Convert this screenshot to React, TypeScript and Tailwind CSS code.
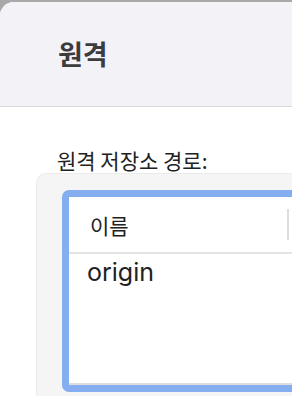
import React from "react";

export default function App() {
  const kr = { fontFamily: '"Noto Sans CJK KR", "Noto Sans", sans-serif' };
  return (
    <div className="w-[292px] h-[396px] overflow-hidden bg-[#a9a9a9] pt-[2px]">
      <div className="h-[394px] rounded-tl-[14px] bg-white overflow-hidden">
        <div className="h-[105px] bg-[#f3f2f7] border-b border-[#d7d7d7] flex items-center pl-[58px]">
          <span className="text-[27px] leading-[32px] font-bold text-[#3c3c3c]" style={kr}>
            원격
          </span>
        </div>
        <div className="pt-[40px]">
          <div className="ml-[57px] text-[21px] leading-[26px] text-[#222222] whitespace-nowrap" style={kr}>
            원격 저장소 경로:
          </div>
          <div className="ml-[36px] w-[300px] h-[230px] bg-[#f5f5f5] rounded-tl-[10px] border-l border-t border-[#ebebeb] pl-[25px] pt-[16px]">
            <div className="w-[300px] h-[202px] border-[7px] border-[#85aef1] rounded-[7px] bg-white flex flex-col">
              <div className="h-[57px] shrink-0 border-b-[2px] border-[#e3e3e3] flex items-center">
                <div className="w-[218px] pl-[21px] text-[21px] leading-[26px] text-[#222222]" style={kr}>
                  이름
                </div>
                <div className="w-[2px] h-[31px] bg-[#dedede]" />
              </div>
              <div className="flex-1 pt-[3px] pl-[18px]">
                <div className="text-[25px] leading-[30px] text-[#222222]" style={{ fontFamily: 'Inter, "Noto Sans", sans-serif' }}>
                  origin
                </div>
              </div>
              <div className="h-[2px] bg-[#dedede] shrink-0" />
            </div>
          </div>
        </div>
      </div>
    </div>
  );
}
